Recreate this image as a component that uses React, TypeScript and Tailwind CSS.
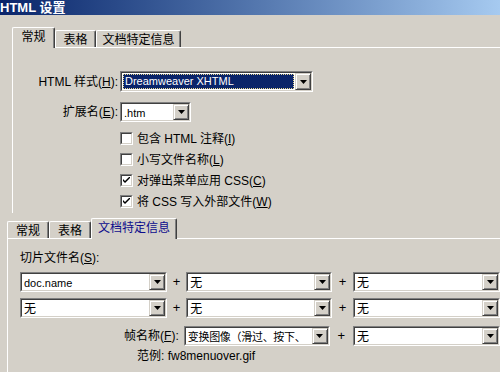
import type { ReactNode } from "react";

const FONT = { fontFamily: '"Liberation Sans", "Noto Sans CJK SC", sans-serif' };

function Arrow() {
  return (
    <div className="flex h-full w-[16px] shrink-0 items-center justify-center border border-t-[#d4d0c8] border-l-[#d4d0c8] border-r-[#404040] border-b-[#404040] bg-[#d4d0c8] shadow-[inset_1px_1px_0_#ffffff,inset_-1px_-1px_0_#808080]">
      <svg width="7" height="4" viewBox="0 0 7 4">
        <path d="M0 0h7L3.5 4z" fill="#000" />
      </svg>
    </div>
  );
}

function Combo({
  w,
  h = 20,
  children,
  focused = false,
}: {
  w: number;
  h?: number;
  children: ReactNode;
  focused?: boolean;
}) {
  return (
    <div
      className="shrink-0 border border-t-[#808080] border-l-[#808080] border-r-white border-b-white"
      style={{ width: w, height: h }}
    >
      <div className="flex h-full items-stretch border border-t-[#404040] border-l-[#404040] border-r-[#d4d0c8] border-b-[#d4d0c8] bg-white">
        <div className="flex min-w-0 flex-1 items-center overflow-hidden whitespace-nowrap p-px">
          {focused ? (
            <div className="flex h-full w-full items-center border border-dotted border-[#e8d890] bg-[#0a246a] pl-px text-[11px] text-white">
              {children}
            </div>
          ) : (
            <div className="pl-px text-black">{children}</div>
          )}
        </div>
        <Arrow />
      </div>
    </div>
  );
}

function Check({ on, children }: { on?: boolean; children: ReactNode }) {
  return (
    <div className="flex h-[21px] items-center">
      <div className="flex h-[13px] w-[13px] items-center justify-center border border-t-[#808080] border-l-[#808080] border-r-white border-b-white">
        <div className="flex h-full w-full items-center justify-center border border-t-[#404040] border-l-[#404040] border-r-[#d4d0c8] border-b-[#d4d0c8] bg-white">
          {on && (
            <svg width="7" height="7" viewBox="0 0 7 7">
              <path d="M0 2v2l2 2 5-5V-1L2 4z" fill="#000" />
            </svg>
          )}
        </div>
      </div>
      <span className="ml-[4px] text-[12px] leading-none text-black">{children}</span>
    </div>
  );
}

function Tab({
  w,
  active,
  blue,
  children,
}: {
  w: number;
  active?: boolean;
  blue?: boolean;
  children: ReactNode;
}) {
  return (
    <div
      className={`relative flex shrink-0 items-center justify-center rounded-t-[2px] border-l border-t border-r border-l-white border-t-white border-r-[#404040] bg-[#d4d0c8] text-[12px] leading-none shadow-[inset_-1px_0_0_#808080] ${
        active ? "z-10 -mb-px h-[21px] pb-[2px]" : "h-[17px] pt-[2px]"
      } ${blue ? "text-[#0c0c8c]" : "text-black"}`}
      style={{ width: w }}
    >
      {children}
    </div>
  );
}

export default function App() {
  return (
    <div className="h-[372px] w-[500px] overflow-hidden bg-[#d4d0c8]" style={FONT}>
      <div className="flex h-[15px] items-end bg-gradient-to-r from-[#0a246a] to-[#a6caf0] text-[13px] font-bold leading-[15px] text-white">
        <span className="-mt-[2px]">HTML 设置</span>
      </div>

      {/* first dialog: 常规 */}
      <div className="h-[198px] overflow-hidden pl-[12px] pt-[12px]">
        <div className="flex h-[20px] items-end">
          <Tab w={43} active>
            常规
          </Tab>
          <Tab w={41}>表格</Tab>
          <Tab w={85}>文档特定信息</Tab>
        </div>
        <div className="h-[200px] border-l border-t border-white pl-px">
          <div className="mt-[23px] flex items-center">
            <div className="w-[104px] text-right text-[12px] leading-none">
              HTML 样式(<u>H</u>):
            </div>
            <div className="ml-[2px]">
              <Combo w={193} h={21} focused>
                Dreamweaver XHTML
              </Combo>
            </div>
          </div>
          <div className="mt-[10px] flex items-center">
            <div className="w-[104px] text-right text-[12px] leading-none">
              扩展名(<u>E</u>):
            </div>
            <div className="ml-[2px]">
              <Combo w={71}>
                <span className="text-[11px]">.htm</span>
              </Combo>
            </div>
          </div>
          <div className="mt-[6px] pl-[106px]">
            <Check>
              包含 HTML 注释(<u>I</u>)
            </Check>
            <Check>
              小写文件名称(<u>L</u>)
            </Check>
            <Check on>
              对弹出菜单应用 CSS(<u>C</u>)
            </Check>
            <Check on>
              将 CSS 写入外部文件(<u>W</u>)
            </Check>
          </div>
        </div>
      </div>

      {/* second dialog: 文档特定信息 */}
      <div className="h-[159px] overflow-hidden pl-[7px] pt-[5px]">
        <div className="flex h-[20px] items-end">
          <Tab w={42}>常规</Tab>
          <Tab w={42}>表格</Tab>
          <Tab w={86} active blue>
            文档特定信息
          </Tab>
        </div>
        <div className="h-[200px] border-l border-t border-white pl-[12px]">
          <div className="mt-[12px] h-[14px] text-[12px] leading-[14px]">
            切片文件名(<u>S</u>):
          </div>
          <div className="mt-[7px] flex h-[20px] items-center">
            <Combo w={147}>
              <span className="text-[11px]">doc.name</span>
            </Combo>
            <div className="w-[22px] text-center text-[13px]">+</div>
            <Combo w={146}>
              <span className="text-[12px]">无</span>
            </Combo>
            <div className="w-[24px] text-center text-[13px]">+</div>
            <Combo w={147}>
              <span className="text-[12px]">无</span>
            </Combo>
          </div>
          <div className="mt-[6px] flex h-[20px] items-center">
            <Combo w={147}>
              <span className="text-[12px]">无</span>
            </Combo>
            <div className="w-[22px] text-center text-[13px]">+</div>
            <Combo w={146}>
              <span className="text-[12px]">无</span>
            </Combo>
            <div className="w-[24px] text-center text-[13px]">+</div>
            <Combo w={147}>
              <span className="text-[12px]">无</span>
            </Combo>
          </div>
          <div className="mt-[8px] flex h-[20px] items-center">
            <div className="w-[169px] pr-[5px] text-right text-[12px] leading-none">
              帧名称(<u>F</u>):
            </div>
            <Combo w={146}>
              <span className="text-[11px] tracking-[-0.3px]">变换图像（滑过、按下、</span>
            </Combo>
            <div className="w-[24px] text-center text-[13px]">+</div>
            <Combo w={147}>
              <span className="text-[12px]">无</span>
            </Combo>
          </div>
          <div className="mt-[3px] pl-[117px] text-[12px] leading-[14px]">
            范例: fw8menuover.gif
          </div>
        </div>
      </div>
    </div>
  );
}
